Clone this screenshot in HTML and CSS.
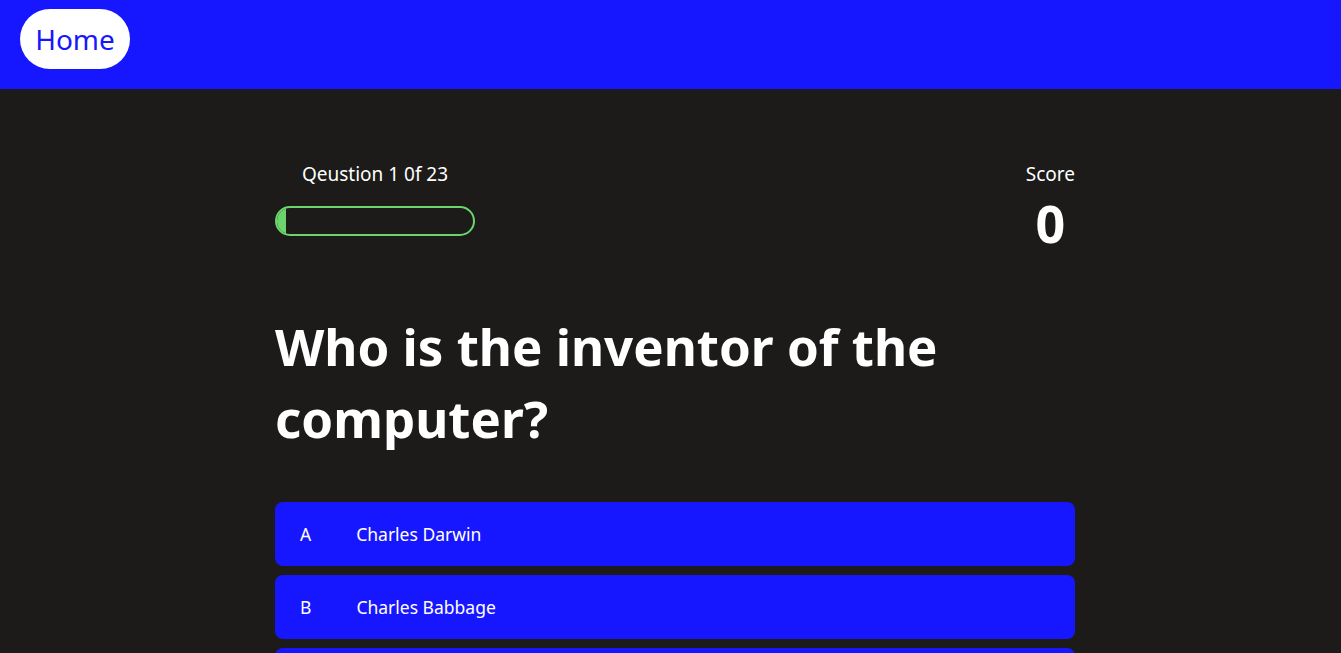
FILE: index.html
```html
<!DOCTYPE html>
<html lang="en">
<head>
<meta charset="utf-8">
<title>Quiz</title>
<link rel="stylesheet" href="styles.css">
</head>
<body>
<header class="topbar">
  <a class="home-btn" href="#">Home</a>
</header>
<main class="main">
  <section class="quiz">
    <div class="status">
      <div class="progress-block">
        <p class="progress-label">Qeustion 1 0f 23</p>
        <div class="progress-bar"><div class="progress-fill" style="width: 4.35%"></div></div>
      </div>
      <div class="score-block">
        <p class="score-label">Score</p>
        <p class="score-value">0</p>
      </div>
    </div>
    <h1 class="question">Who is the inventor of the computer?</h1>
    <div class="answers">
      <button class="answer"><span class="answer-letter">A</span><span class="answer-text">Charles Darwin</span></button>
      <button class="answer"><span class="answer-letter">B</span><span class="answer-text">Charles Babbage</span></button>
      <button class="answer"><span class="answer-letter">C</span><span class="answer-text">Albert Einstein</span></button>
      <button class="answer"><span class="answer-letter">D</span><span class="answer-text">Isaac Newton</span></button>
    </div>
  </section>
</main>
</body>
</html>
```

FILE: styles.css
```css
* { box-sizing: border-box; }
html, body {
  margin: 0;
  padding: 0;
  background: #1c1b19;
  color: #ffffff;
  font-family: "Noto Sans", "Open Sans", sans-serif;
}
.topbar {
  height: 89px;
  background: #1717ff;
  padding: 9px 20px;
}
.home-btn {
  display: inline-flex;
  align-items: center;
  justify-content: center;
  width: 110px;
  height: 60px;
  border-radius: 30px;
  background: #ffffff;
  color: #1717ff;
  text-decoration: none;
  font-size: 28px;
  font-weight: 400;
}
.main {
  display: flex;
  justify-content: center;
  padding-left: 9px;
}
.quiz {
  width: 800px;
  padding-top: 72px;
}
.status {
  display: flex;
  justify-content: space-between;
  align-items: flex-start;
}
.progress-block {
  width: 200px;
  display: flex;
  flex-direction: column;
  align-items: center;
}
.progress-label {
  margin: 0;
  font-size: 19px;
  line-height: 26px;
}
.progress-bar {
  margin-top: 19px;
  width: 200px;
  height: 30px;
  border: 2px solid #6bd56b;
  border-radius: 15px;
  overflow: hidden;
}
.progress-fill {
  height: 100%;
  background: #6bd56b;
}
.score-block {
  display: flex;
  flex-direction: column;
  align-items: center;
}
.score-label {
  margin: 0;
  font-size: 19px;
  line-height: 26px;
}
.score-value {
  margin: 8px 0 0;
  font-size: 52px;
  font-weight: 700;
  line-height: 56px;
}
.question {
  margin: 59px 0 0;
  font-size: 51px;
  font-weight: 700;
  line-height: 72px;
}
.answers {
  margin-top: 48px;
  display: flex;
  flex-direction: column;
  gap: 9px;
}
.answer {
  display: flex;
  align-items: center;
  height: 64px;
  padding: 0 25px 0 25px;
  border: none;
  border-radius: 8px;
  background: #1717ff;
  color: #ffffff;
  font-family: inherit;
  font-size: 17.5px;
  text-align: left;
  cursor: pointer;
}
.answer-letter {
  margin-right: 45px;
}
```
